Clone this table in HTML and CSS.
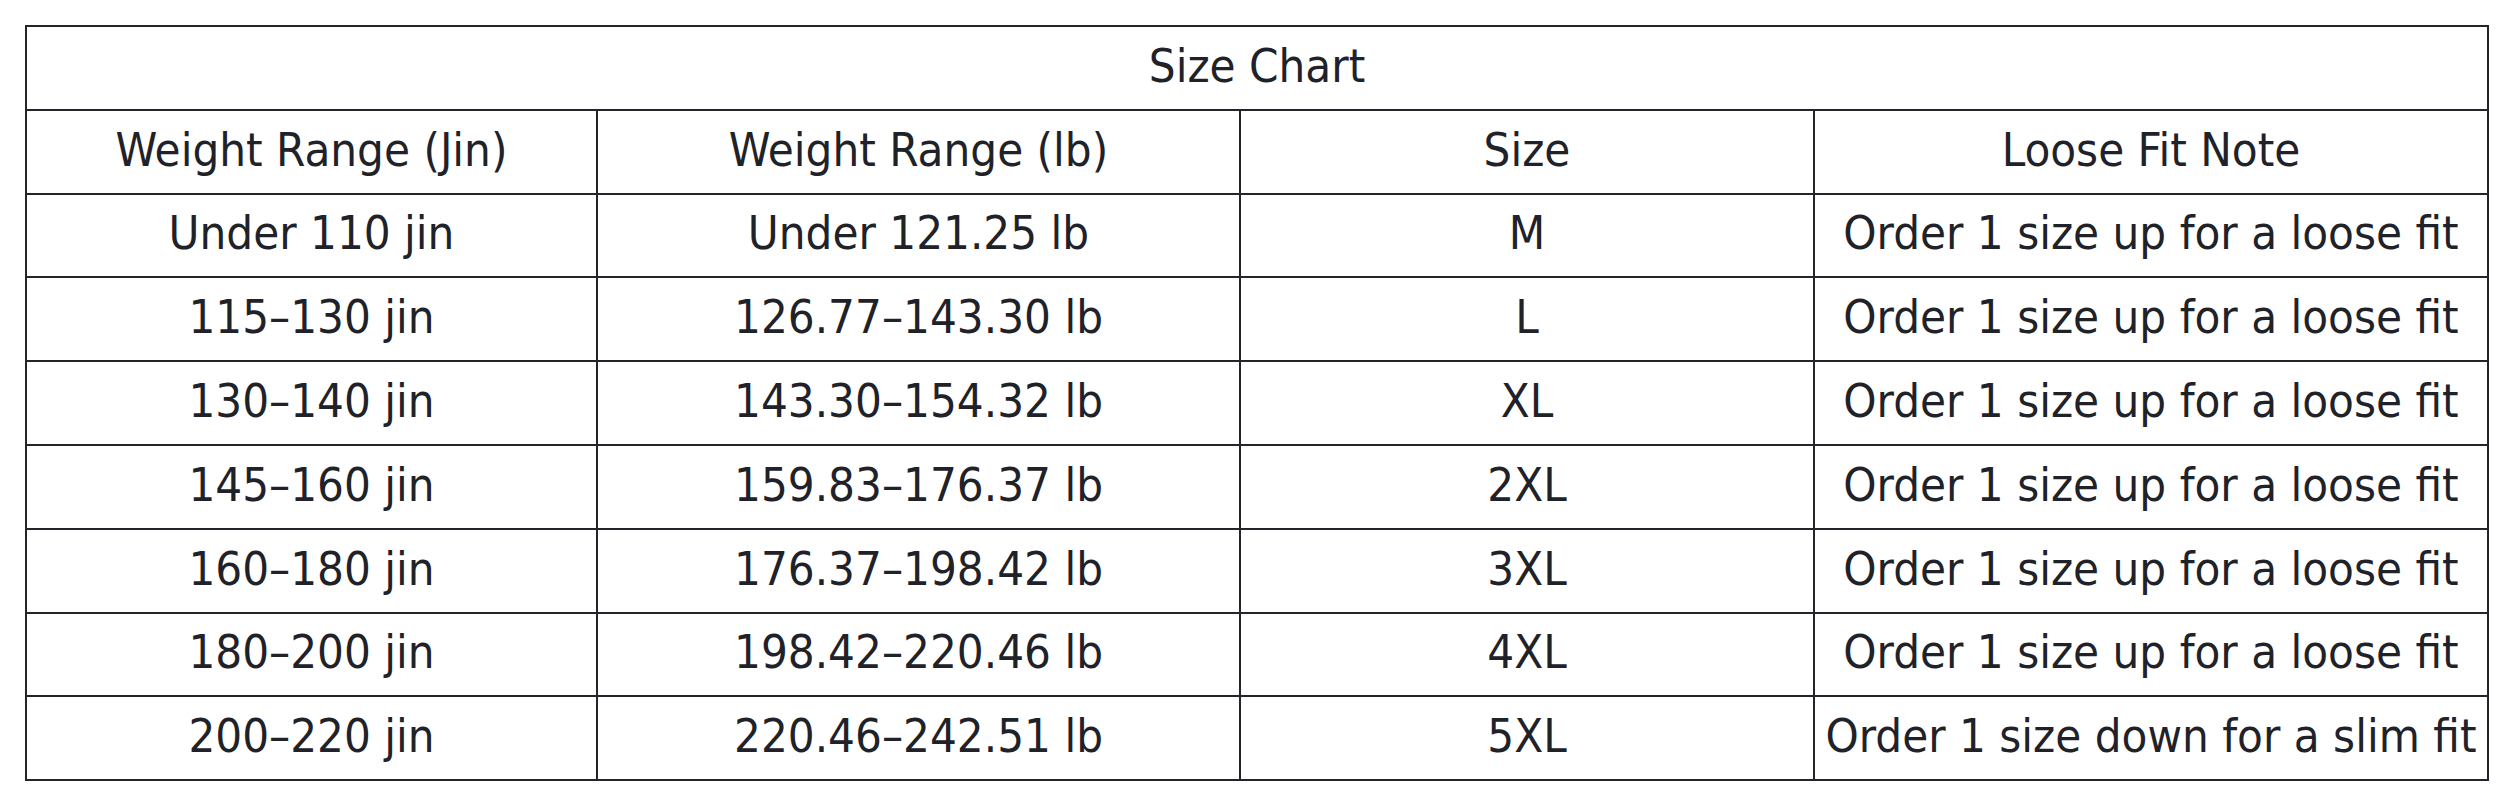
FILE: index.html
```html
<!DOCTYPE html>
<html>
<head>
<meta charset="utf-8">
<link rel="stylesheet" href="styles.css">
</head>
<body>
<table class="chart">
  <colgroup>
    <col class="c1"><col class="c2"><col class="c3"><col class="c4">
  </colgroup>
  <tr><td class="title" colspan="4">Size Chart</td></tr>
  <tr><td>Weight Range (Jin)</td><td>Weight Range (lb)</td><td>Size</td><td>Loose Fit Note</td></tr>
  <tr><td>Under 110 jin</td><td>Under 121.25 lb</td><td>M</td><td>Order 1 size up for a loose fit</td></tr>
  <tr><td>115–130 jin</td><td>126.77–143.30 lb</td><td>L</td><td>Order 1 size up for a loose fit</td></tr>
  <tr><td>130–140 jin</td><td>143.30–154.32 lb</td><td>XL</td><td>Order 1 size up for a loose fit</td></tr>
  <tr><td>145–160 jin</td><td>159.83–176.37 lb</td><td>2XL</td><td>Order 1 size up for a loose fit</td></tr>
  <tr><td>160–180 jin</td><td>176.37–198.42 lb</td><td>3XL</td><td>Order 1 size up for a loose fit</td></tr>
  <tr><td>180–200 jin</td><td>198.42–220.46 lb</td><td>4XL</td><td>Order 1 size up for a loose fit</td></tr>
  <tr><td>200–220 jin</td><td>220.46–242.51 lb</td><td>5XL</td><td>Order 1 size down for a slim fit</td></tr>
</table>
</body>
</html>
```
FILE: styles.css
```css
html, body {
  margin: 0;
  background: #ffffff;
}
body {
  padding: 25px 25px 0 25px;
  font-family: "DejaVu Sans Condensed", "DejaVu Sans", sans-serif;
  color: #1f2228;
}
.chart {
  border-collapse: collapse;
  table-layout: fixed;
  width: 2462px;
}
.c1 { width: 571px; }
.c2 { width: 643px; }
.c3 { width: 574px; }
.c4 { width: 674px; }
.chart td {
  border: 2.5px solid #23252a;
  height: 83.8px;
  padding: 0 0 5px 0;
  box-sizing: border-box;
  text-align: center;
  vertical-align: middle;
  font-size: 47px;
  line-height: 1;
  white-space: nowrap;
}
```
